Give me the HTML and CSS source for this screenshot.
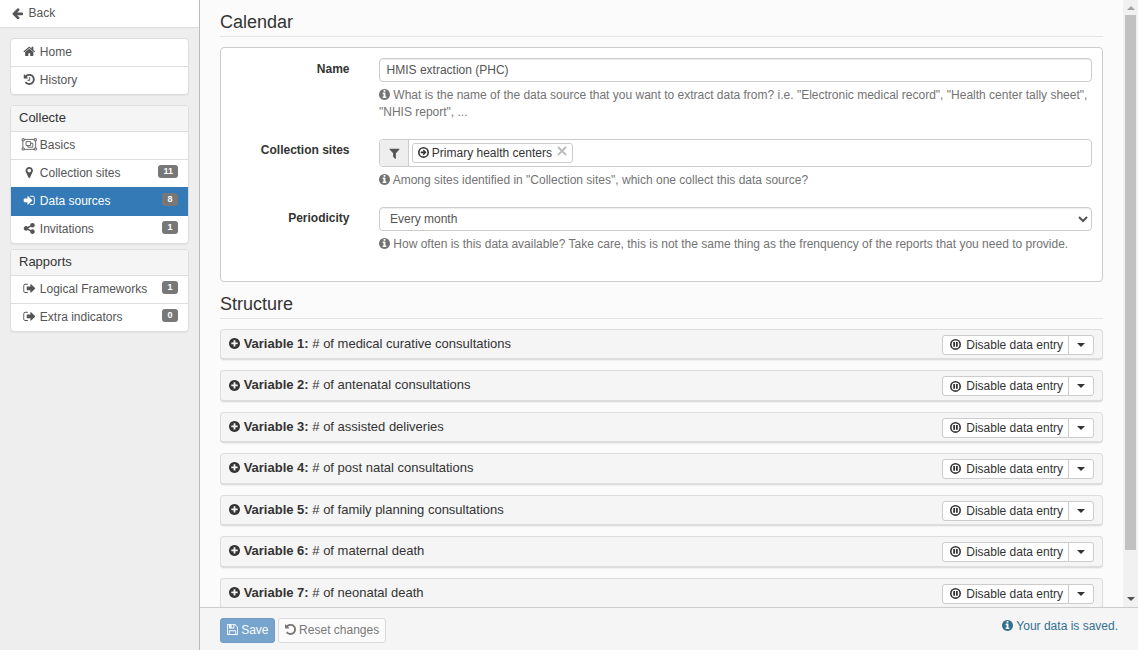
FILE: index.html
```html
<!DOCTYPE html>
<html lang="en">
<head>
<meta charset="utf-8">
<title>Data sources</title>
<link rel="stylesheet" href="styles.css">
</head>
<body>
<svg class="sprite" aria-hidden="true">
  <symbol id="arrow-left" viewBox="128 0 1536 1792"><path d="M1664 896v128q0 53-32.5 90.5t-84.5 37.5h-704l293 294q38 36 38 90t-38 90l-75 76q-37 37-90 37-52 0-91-37l-651-652q-37-37-37-90 0-52 37-91l651-650q38-38 91-38 52 0 90 38l75 74q38 38 38 91t-38 91l-293 293h704q52 0 84.5 37.5t32.5 90.5z"/></symbol>
  <symbol id="home" viewBox="-256 0 2304 1792"><path d="M1472 992v480q0 26-19 45t-45 19h-384v-384h-256v384h-384q-26 0-45-19t-19-45v-480q0-1 .5-3t.5-3l575-474 575 474q1 2 1 6zm223-69l-62 74q-8 9-21 11h-3q-13 0-21-7l-692-577-692 577q-12 8-24 7-13-2-21-11l-62-74q-8-10-7-23.5t11-21.5l719-599q32-26 76-26t76 26l244 204v-195q0-14 9-23t23-9h192q14 0 23 9t9 23v408l219 182q10 8 11 21.5t-7 23.5z"/></symbol>
  <symbol id="history" viewBox="-256 0 2304 1792"><path d="M1664 896q0 156-61 298t-164 245-245 164-298 61q-172 0-327-72.5t-264-204.5q-7-10-6.5-22.5t8.5-20.5l137-138q10-9 25-9 16 2 23 12 73 95 179 147t225 52q104 0 198.5-40.5t163.5-109.5 109.5-163.5 40.5-198.5-40.5-198.5-109.5-163.5-163.5-109.5-198.5-40.5q-98 0-188 35.5t-160 101.5l137 138q31 30 14 69-17 40-59 40h-448q-26 0-45-19t-19-45v-448q0-42 40-59 39-17 69 14l130 129q107-101 244.5-156.5t284.5-55.5q156 0 298 61t245 164 164 245 61 298zm-640-288v448q0 14-9 23t-23 9h-320q-14 0-23-9t-9-23v-64q0-14 9-23t23-9h224v-352q0-14 9-23t23-9h64q14 0 23 9t9 23z"/></symbol>
  <symbol id="object-group" viewBox="-256 0 2304 1792"><g fill="none" stroke="currentColor" stroke-width="120"><path d="M192 200H1600M192 1592H1600M0 392V1400M1792 392V1400"/><path d="M-100 100H192V392H-100zM1600 100H1892V392H1600zM-100 1400H192V1692H-100zM1600 1400H1892V1692H1600z"/><path d="M448 500H1088V1060H448zM1088 740H1400V1290H704V1060"/></g></symbol>
  <symbol id="map-marker" viewBox="-256 0 2304 1792"><path d="M1152 640q0-106-75-181t-181-75-181 75-75 181 75 181 181 75 181-75 75-181zm256 0q0 109-33 179l-364 774q-16 33-47.5 52t-67.5 19-67.5-19-46.5-52l-365-774q-33-70-33-179 0-212 150-362t362-150 362 150 150 362z"/></symbol>
  <symbol id="sign-in" viewBox="-256 0 2304 1792"><path d="M1312 896q0 26-19 45l-544 544q-19 19-45 19t-45-19-19-45v-288h-448q-26 0-45-19t-19-45v-384q0-26 19-45t45-19h448v-288q0-26 19-45t45-19 45 19l544 544q19 19 19 45zm352-352v704q0 119-84.5 203.5t-203.5 84.5h-320q-13 0-22.5-9.5t-9.5-22.5q0-4-1-20t-.5-26.5 3-23.5 10-19.5 20.5-6.5h320q66 0 113-47t47-113v-704q0-66-47-113t-113-47h-312l-11.5-1-11.5-3-8-5.5-7-9-2-13.5q0-4-1-20t-.5-26.5 3-23.5 10-19.5 20.5-6.5h320q119 0 203.5 84.5t84.5 203.5z"/></symbol>
  <symbol id="sign-out" viewBox="-256 0 2304 1792"><path d="M704 1440q0 4 1 20t.5 26.5-3 23.5-10 19.5-20.5 6.5h-320q-119 0-203.5-84.5t-84.5-203.5v-704q0-119 84.5-203.5t203.5-84.5h320q13 0 22.5 9.5t9.5 22.5q0 4 1 20t.5 26.5-3 23.5-10 19.5-20.5 6.5h-320q-66 0-113 47t-47 113v704q0 66 47 113t113 47h312l11.5 1 11.5 3 8 5.5 7 9 2 13.5zm1024-544q0 26-19 45l-544 544q-19 19-45 19t-45-19-19-45v-288h-448q-26 0-45-19t-19-45v-384q0-26 19-45t45-19h448v-288q0-26 19-45t45-19 45 19l544 544q19 19 19 45z"/></symbol>
  <symbol id="share" viewBox="-256 0 2304 1792"><path d="M1344 1024q133 0 226.5 93.5t93.5 226.5-93.5 226.5-226.5 93.5-226.5-93.5-93.5-226.5q0-12 2-34l-360-180q-92 86-218 86-133 0-226.5-93.5t-93.5-226.5 93.5-226.5 226.5-93.5q126 0 218 86l360-180q-2-22-2-34 0-133 93.5-226.5t226.5-93.5 226.5 93.5 93.5 226.5-93.5 226.5-226.5 93.5q-126 0-218-86l-360 180q2 22 2 34t-2 34l360 180q92-86 218-86z"/></symbol>
  <symbol id="info" viewBox="128 0 1536 1792"><path d="M1152 1376v-160q0-14-9-23t-23-9h-96v-512q0-14-9-23t-23-9h-320q-14 0-23 9t-9 23v160q0 14 9 23t23 9h96v320h-96q-14 0-23 9t-9 23v160q0 14 9 23t23 9h448q14 0 23-9t9-23zm-128-896v-160q0-14-9-23t-23-9h-192q-14 0-23 9t-9 23v160q0 14 9 23t23 9h192q14 0 23-9t9-23zm640 416q0 209-103 385.5t-279.5 279.5-385.5 103-385.5-103-279.5-279.5-103-385.5 103-385.5 279.5-279.5 385.5-103 385.5 103 279.5 279.5 103 385.5z"/></symbol>
  <symbol id="filter" viewBox="128 0 1536 1792"><path d="M1595 295q17 41-14 70l-493 493v742q0 42-39 59-13 5-25 5-27 0-45-19l-256-256q-19-19-19-45v-486l-493-493q-31-29-14-70 17-39 59-39h1280q42 0 59 39z"/></symbol>
  <symbol id="arrow-circle" viewBox="128 0 1536 1792"><circle cx="896" cy="896" r="656" fill="none" stroke="currentColor" stroke-width="224"/><path d="M1285 896q0 26-18 46l-320 320q-23 20-46 0l-90-90q-22-23 0-46l116-118H528q-32 0-32-32V816q0-32 32-32h399L811 666q-22-23 0-46l90-90q23-20 46 0l320 320q18 20 18 46z"/></symbol>
  <symbol id="plus" viewBox="128 0 1536 1792"><path d="M1344 960v-128q0-26-19-45t-45-19h-256v-256q0-26-19-45t-45-19h-128q-26 0-45 19t-19 45v256h-256q-26 0-45 19t-19 45v128q0 26 19 45t45 19h256v256q0 26 19 45t45 19h128q26 0 45-19t19-45v-256h256q26 0 45-19t19-45zm320-64q0 209-103 385.5t-279.5 279.5-385.5 103-385.5-103-279.5-279.5-103-385.5 103-385.5 279.5-279.5 385.5-103 385.5 103 279.5 279.5 103 385.5z"/></symbol>
  <symbol id="pause" viewBox="128 0 1536 1792"><circle cx="896" cy="896" r="656" fill="none" stroke="currentColor" stroke-width="224"/><path d="M576 576h256v640H576zM960 576h256v640H960z"/></symbol>
  <symbol id="floppy" viewBox="128 0 1536 1792"><path d="M512 1536h768v-384h-768v384zm896 0h128v-896q0-14-10-38.5t-20-34.5l-281-281q-10-10-34-20t-39-10v416q0 40-28 68t-68 28h-576q-40 0-68-28t-28-68v-416h-128v1280h128v-416q0-40 28-68t68-28h832q40 0 68 28t28 68v416zm-384-928v-320q0-13-9.5-22.5t-22.5-9.5h-192q-13 0-22.5 9.5t-9.5 22.5v320q0 13 9.5 22.5t22.5 9.5h192q13 0 22.5-9.5t9.5-22.5zm640 32v928q0 40-28 68t-68 28h-1344q-40 0-68-28t-28-68v-1344q0-40 28-68t68-28h928q40 0 88 20t76 48l280 280q28 28 48 76t20 88z"/></symbol>
  <symbol id="undo" viewBox="128 0 1536 1792"><path d="M1664 896q0 156-61 298t-164 245-245 164-298 61q-172 0-327-72.5t-264-204.5q-7-10-6.5-22.5t8.5-20.5l137-138q10-9 25-9 16 2 23 12 73 95 179 147t225 52q104 0 198.5-40.5t163.5-109.5 109.5-163.5 40.5-198.5-40.5-198.5-109.5-163.5-163.5-109.5-198.5-40.5q-98 0-188 35.5t-160 101.5l137 138q31 30 14 69-17 40-59 40h-448q-26 0-45-19t-19-45v-448q0-42 40-59 39-17 69 14l130 129q107-101 244.5-156.5t284.5-55.5q156 0 298 61t245 164 164 245 61 298z"/></symbol>
</svg>
<div class="app">
  <aside class="sidebar">
    <a class="back"><svg class="icon"><use href="#arrow-left"/></svg>Back</a>
    <nav class="menu menu-top">
      <a class="item"><svg class="icon fw"><use href="#home"/></svg>Home</a>
      <a class="item"><svg class="icon fw"><use href="#history"/></svg>History</a>
    </nav>
    <nav class="menu">
      <div class="menu-title">Collecte</div>
      <a class="item"><svg class="icon fw"><use href="#object-group"/></svg>Basics</a>
      <a class="item"><svg class="icon fw"><use href="#map-marker"/></svg>Collection sites<span class="badge">11</span></a>
      <a class="item active"><svg class="icon fw"><use href="#sign-in"/></svg>Data sources<span class="badge">8</span></a>
      <a class="item"><svg class="icon fw"><use href="#share"/></svg>Invitations<span class="badge">1</span></a>
    </nav>
    <nav class="menu">
      <div class="menu-title">Rapports</div>
      <a class="item"><svg class="icon fw"><use href="#sign-out"/></svg>Logical Frameworks<span class="badge">1</span></a>
      <a class="item"><svg class="icon fw"><use href="#sign-out"/></svg>Extra indicators<span class="badge">0</span></a>
    </nav>
  </aside>
  <div class="main">
    <div class="viewport">
      <div class="content">
        <h2 class="legend">Calendar</h2>
        <form class="panel">
          <div class="row">
            <label class="label" for="name">Name</label>
            <div class="field">
              <input class="control" id="name" value="HMIS extraction (PHC)">
              <p class="help"><svg class="icon"><use href="#info"/></svg> What is the name of the data source that you want to extract data from? i.e. "Electronic medical record", "Health center tally sheet", "NHIS report", ...</p>
            </div>
          </div>
          <div class="row row-sites">
            <span class="label">Collection sites</span>
            <div class="field">
              <div class="group">
                <span class="addon"><svg class="icon"><use href="#filter"/></svg></span>
                <div class="tags"><span class="tag"><svg class="icon"><use href="#arrow-circle"/></svg> Primary health centers<svg class="close" viewBox="0 0 10 10"><path d="M1 1L9 9M9 1L1 9"/></svg></span></div>
              </div>
              <p class="help"><svg class="icon"><use href="#info"/></svg> Among sites identified in "Collection sites", which one collect this data source?</p>
            </div>
          </div>
          <div class="row">
            <label class="label" for="period">Periodicity</label>
            <div class="field">
              <select class="control select" id="period"><option>Every month</option></select>
              <p class="help"><svg class="icon"><use href="#info"/></svg> How often is this data available? Take care, this is not the same thing as the frenquency of the reports that you need to provide.</p>
            </div>
          </div>
        </form>
        <h2 class="legend legend-structure">Structure</h2>
        <div class="variables">
          <div class="variable"><span><svg class="icon"><use href="#plus"/></svg> <b>Variable 1:</b> # of medical curative consultations</span><div class="btns"><span class="btn-entry"><svg class="icon"><use href="#pause"/></svg>Disable data entry</span><span class="btn-caret"><i class="caret"></i></span></div></div>
          <div class="variable"><span><svg class="icon"><use href="#plus"/></svg> <b>Variable 2:</b> # of antenatal consultations</span><div class="btns"><span class="btn-entry"><svg class="icon"><use href="#pause"/></svg>Disable data entry</span><span class="btn-caret"><i class="caret"></i></span></div></div>
          <div class="variable"><span><svg class="icon"><use href="#plus"/></svg> <b>Variable 3:</b> # of assisted deliveries</span><div class="btns"><span class="btn-entry"><svg class="icon"><use href="#pause"/></svg>Disable data entry</span><span class="btn-caret"><i class="caret"></i></span></div></div>
          <div class="variable"><span><svg class="icon"><use href="#plus"/></svg> <b>Variable 4:</b> # of post natal consultations</span><div class="btns"><span class="btn-entry"><svg class="icon"><use href="#pause"/></svg>Disable data entry</span><span class="btn-caret"><i class="caret"></i></span></div></div>
          <div class="variable"><span><svg class="icon"><use href="#plus"/></svg> <b>Variable 5:</b> # of family planning consultations</span><div class="btns"><span class="btn-entry"><svg class="icon"><use href="#pause"/></svg>Disable data entry</span><span class="btn-caret"><i class="caret"></i></span></div></div>
          <div class="variable"><span><svg class="icon"><use href="#plus"/></svg> <b>Variable 6:</b> # of maternal death</span><div class="btns"><span class="btn-entry"><svg class="icon"><use href="#pause"/></svg>Disable data entry</span><span class="btn-caret"><i class="caret"></i></span></div></div>
          <div class="variable"><span><svg class="icon"><use href="#plus"/></svg> <b>Variable 7:</b> # of neonatal death</span><div class="btns"><span class="btn-entry"><svg class="icon"><use href="#pause"/></svg>Disable data entry</span><span class="btn-caret"><i class="caret"></i></span></div></div>
        </div>
      </div>
      <div class="scrollbar"><i class="arrow-up"></i><i class="thumb"></i><i class="arrow-down"></i></div>
    </div>
    <footer class="footer">
      <button class="btn btn-save"><svg class="icon"><use href="#floppy"/></svg> Save</button>
      <button class="btn"><svg class="icon"><use href="#undo"/></svg> Reset changes</button>
      <span class="status"><svg class="icon"><use href="#info"/></svg> Your data is saved.</span>
    </footer>
  </div>
</div>
</body>
</html>
```
FILE: styles.css
```css
* { box-sizing: border-box; }
body {
  margin: 0;
  font: 12px/17px "Liberation Sans", Arial, sans-serif;
  color: #333;
}
.sprite { display: none; }
.icon {
  display: inline-block;
  width: 11px;
  height: 12.8px;
  vertical-align: -2px;
  fill: currentColor;
}
.icon.fw { width: 16.5px; margin: -2px -.5px 0; flex: none; }
.app { display: flex; width: 1138px; height: 650px; overflow: hidden; }

/* Sidebar */
.sidebar {
  width: 200px;
  flex: none;
  background: #eee;
  border-right: 1px solid #bbb;
  color: #555;
}
.back {
  display: flex;
  align-items: center;
  gap: 5.5px;
  height: 28px;
  padding: 0 12px 1px;
  background: #fff;
  border-bottom: 1px solid #ddd;
}
.menu {
  margin: 0 10px 5px;
  background: #fff;
  border: 1px solid #ddd;
  border-radius: 4px;
  box-shadow: 0 1px 1px rgba(0, 0, 0, .05);
}
.menu-top { margin: 10px 10px; }
.menu-title {
  height: 25px;
  padding: 3px 8px;
  background: #f5f5f5;
  border-radius: 3px 3px 0 0;
  font-size: 13px;
  color: #333;
}
.item {
  display: flex;
  align-items: center;
  gap: 3.3px;
  height: 28px;
  padding: 0 10px;
  border-top: 1px solid #ddd;
}
.menu-top .item:first-child { height: 27px; border-top: 0; }
.item.active {
  position: relative;
  height: 29px;
  margin-bottom: -1px;
  padding-bottom: 1px;
  background: #337ab7;
  border-color: #337ab7;
  color: #fff;
}
.badge {
  min-width: 16px;
  height: 13px;
  margin: -4px 0 0 auto;
  padding: 0 5px;
  border-radius: 3px;
  background: #777;
  color: #fff;
  font: bold 9px/13px "Liberation Sans", Arial, sans-serif;
  text-align: center;
}

/* Main column */
.main { display: flex; flex-direction: column; flex: 1; min-width: 0; }
.viewport { display: flex; height: 607px; overflow: hidden; background: #fbfbfb; }
.content { flex: 1; padding: 12px 20px 0; }
.legend {
  height: 25px;
  margin: 0 0 10px;
  border-bottom: 1px solid #e5e5e5;
  font-size: 18px;
  font-weight: normal;
  line-height: 20px;
}
.legend-structure { margin-top: 12px; }
.panel {
  height: 235px;
  padding: 10px;
  background: #fff;
  border: 1px solid #ccc;
  border-radius: 4px;
}
.row { display: flex; gap: 29.5px; height: 81px; }
.row-sites { height: 68px; }
.label { width: 118.5px; padding-top: 3px; font-weight: bold; text-align: right; }
.field { flex: 1; }
.control {
  display: block;
  width: 100%;
  height: 24px;
  padding: 0 6.6px;
  border: 1px solid #ccc;
  border-radius: 4px;
  background: #fff;
  box-shadow: inset 0 1px 1px rgba(0, 0, 0, .075);
  color: #555;
  font: inherit;
}
.help { margin: 5px 0 0; color: #737373; }
.group { display: flex; height: 28px; border: 1px solid #ccc; border-radius: 4px; overflow: hidden; }
.addon {
  display: flex;
  align-items: center;
  justify-content: center;
  width: 29px;
  background: #eee;
  border-right: 1px solid #ccc;
  color: #555;
}
.tags { padding: 3px; }
.tag {
  display: block;
  height: 20px;
  padding: 0 5px 0 4.5px;
  border: 1px solid #ccc;
  border-radius: 3px;
  line-height: 18px;
}
.close { width: 10px; height: 10px; margin-left: 5.5px; vertical-align: 1px; stroke: #bbb; stroke-width: 1.8; fill: none; }
.select { padding: 0 6px; }

/* Variables */
.variables { display: flex; flex-direction: column; gap: 10px; }
.variable {
  display: flex;
  flex: none;
  justify-content: space-between;
  height: 31.43px;
  padding: 5px 8px;
  background: #f5f5f5;
  border: 1px solid #ddd;
  border-bottom-width: 2px;
  border-radius: 4px;
  box-shadow: 0 1px 1px rgba(0, 0, 0, .05);
  font-size: 13px;
}
.btns {
  display: flex;
  height: 20px;
  background: #fff;
  border: 1px solid #ccc;
  border-radius: 3px;
  font-size: 12px;
  line-height: 18px;
}
.btn-entry { padding: 0 5px 0 6.7px; }
.btn-entry .icon { margin-right: 5.6px; }
.btn-caret { display: flex; align-items: center; justify-content: center; width: 25px; border-left: 1px solid #ccc; }
.caret { border: 4px solid transparent; border-top-color: #333; border-bottom: 0; }

/* Drawn scrollbar */
.scrollbar {
  display: flex;
  flex-direction: column;
  align-items: center;
  width: 15px;
  padding: 6px 0;
  background: #f1f1f1;
}
.arrow-up { border: 4px solid transparent; border-bottom-color: #a3a3a3; border-top: 0; }
.thumb { width: 11px; height: 535px; margin-top: 5px; background: #c1c1c1; }
.arrow-down { margin-top: auto; border: 4px solid transparent; border-top-color: #505050; border-bottom: 0; }

/* Footer */
.footer {
  display: flex;
  align-items: flex-start;
  gap: 3px;
  height: 43px;
  padding: 10px 20px;
  background: #f5f5f5;
  border-top: 1px solid #ccc;
}
.btn {
  height: 25px;
  padding: 0 5.5px 0 5.8px;
  border: 1px solid #ccc;
  border-radius: 3px;
  background: #fff;
  color: #333;
  font: inherit;
  opacity: .65;
}
.btn-save { background: #337ab7; border-color: #2e6da4; color: #fff; }
.status { margin-left: auto; color: #31708f; }
```
